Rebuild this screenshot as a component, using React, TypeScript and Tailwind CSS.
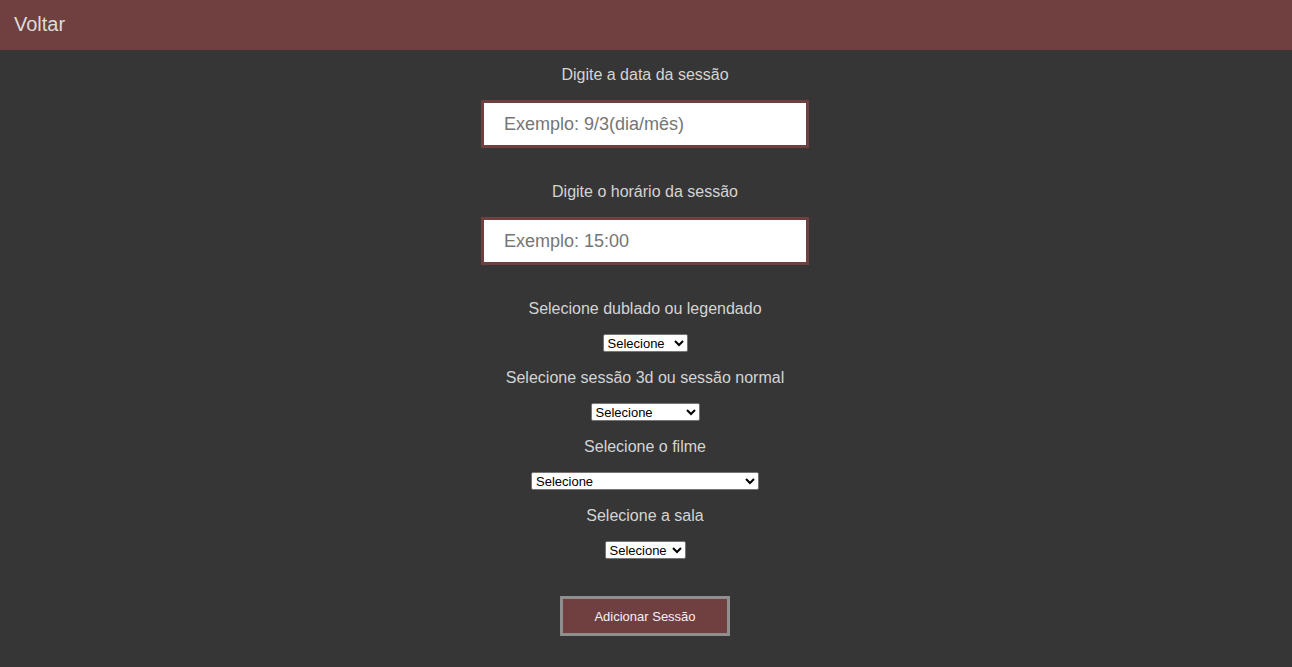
import React, { useState } from "react";

const labelCls = "text-[16px] leading-[18px] text-[#d4d4d4]";
const selectCls =
  "h-[18px] bg-white text-black border border-[#767676] text-[13px] leading-[16px] pl-0 rounded-[2px]";

const App: React.FC = () => {
  const [data, setData] = useState("");
  const [horario, setHorario] = useState("");

  return (
    <div className="min-h-screen bg-[#363636] font-['Liberation_Sans',Arial,sans-serif]">
      <header className="h-[50px] bg-[#703f3f] flex items-center px-[14px] pb-[2px]">
        <a className="text-[20px] text-[#dcdcdc] cursor-pointer">Voltar</a>
      </header>

      <form className="flex flex-col items-center pr-[2px]" onSubmit={(e) => e.preventDefault()}>
        <p className={`${labelCls} mt-[16px]`}>Digite a data da sessão</p>
        <input
          className="mt-[16px] w-[328px] h-[48px] bg-white border-[3px] border-[#703f3f] px-[20px] text-[18px] text-black placeholder:text-[#757575] outline-none"
          placeholder="Exemplo: 9/3(dia/mês)"
          value={data}
          onChange={(e) => setData(e.target.value)}
        />

        <p className={`${labelCls} mt-[35px]`}>Digite o horário da sessão</p>
        <input
          className="mt-[16px] w-[328px] h-[48px] bg-white border-[3px] border-[#703f3f] px-[20px] text-[18px] text-black placeholder:text-[#757575] outline-none"
          placeholder="Exemplo: 15:00"
          value={horario}
          onChange={(e) => setHorario(e.target.value)}
        />

        <p className={`${labelCls} mt-[35px]`}>Selecione dublado ou legendado</p>
        <select className={`${selectCls} mt-[16px] w-[85px]`}>
          <option>Selecione</option>
          <option>Dublado</option>
          <option>Legendado</option>
        </select>

        <p className={`${labelCls} mt-[17px]`}>Selecione sessão 3d ou sessão normal</p>
        <select className={`${selectCls} mt-[16px] w-[109px]`}>
          <option>Selecione</option>
          <option>Sessão 3d</option>
          <option>Sessão normal</option>
        </select>

        <p className={`${labelCls} mt-[17px]`}>Selecione o filme</p>
        <select className={`${selectCls} mt-[16px] w-[228px]`}>
          <option>Selecione</option>
        </select>

        <p className={`${labelCls} mt-[17px]`}>Selecione a sala</p>
        <select className={`${selectCls} mt-[16px] w-[81px]`}>
          <option>Selecione</option>
          <option>Sala 1</option>
          <option>Sala 2</option>
        </select>

        <button
          type="submit"
          className="mt-[37px] mb-[30px] w-[170px] h-[40px] pt-[2px] bg-[#703f3f] border-[3px] border-[#8f8f8f] text-[13px] text-[#f5f0f5] cursor-pointer"
        >
          Adicionar Sessão
        </button>
      </form>
    </div>
  );
};

export default App;
